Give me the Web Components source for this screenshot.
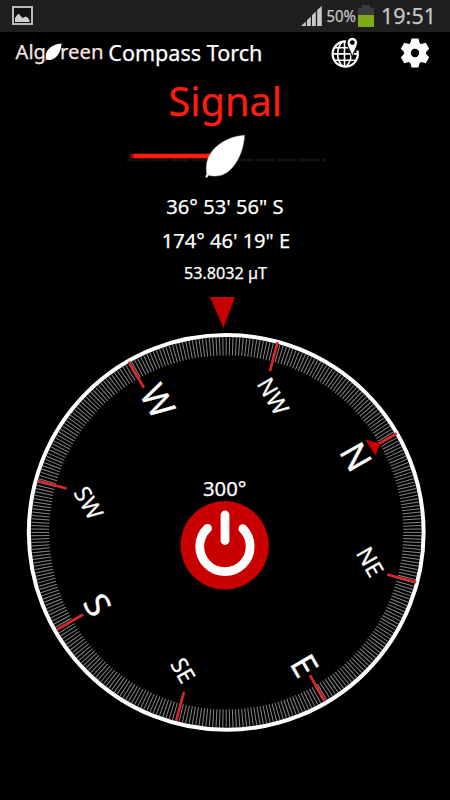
<!DOCTYPE html>
<html lang="en">
<head>
<meta charset="utf-8">
<title>Compass Torch</title>
<style>
html,body{margin:0;background:#000;height:100%;overflow:hidden}
body{font-family:"Noto Sans","Open Sans",sans-serif;color:#fff}
</style>
</head>
<body>
<compass-app></compass-app>
<script>
const define = (name, html) => customElements.define(name, class extends HTMLElement {
  constructor() {
    super();
    this.attachShadow({ mode: 'open' });
  }
  connectedCallback() {
    this.shadowRoot.innerHTML = typeof html === 'function' ? html(this) : html;
  }
});

// One line of text fitted to a measured width: w/h box, x start, b baseline, len text width.
define('fit-label', el => {
  const a = n => el.getAttribute(n);
  return `<style>:host{display:block;flex:none}svg{display:block;overflow:visible}text{stroke:currentColor;stroke-width:.25px}</style>
  <svg width="${a('w')}" height="${a('h')}"><text x="${a('x') || 0}" y="${a('b')}" font-size="${a('size')}"
   fill="currentColor" textLength="${a('len')}" lengthAdjust="spacingAndGlyphs">${a('text').replace(/"/g, '&quot;')}</text></svg>`;
});

define('status-bar', `
<style>
:host{display:flex;height:32px;background:#1f1f1f;color:#c4c4c4;align-items:flex-start}
svg{display:block;flex:none}
.pic{margin:6px 0 0 12px}
.gap{flex:1}
.sig{margin:6px 3px 0 0}
.bat{margin:5px 8px 0 0}
</style>
<svg class="pic" width="21" height="19"><rect x="1" y="1" width="19" height="17" fill="#111" stroke="#b9b9b9" stroke-width="2"/><path d="M3 16V12L5.500 8.500L7 8L9.500 11L11 12L13.500 10.500L15 11L17.500 14V16Z" fill="#d0d0d0"/></svg>
<span class="gap"></span>
<svg class="sig" width="22" height="21"><path d="M0 20L4.800 15.500V20ZM6 20V14.300L9.800 10.500V20ZM11 20V9.300L14.800 5.500V20ZM16.200 20V4L20.800 0V20Z" fill="#c8c8c8"/></svg>
<fit-label w="32" h="32" x=".5" b="22" size="15.500" len="29.500" text="50%"></fit-label>
<svg class="bat" width="16" height="22"><path d="M4 0H12V3H16V10H0V3H4Z" fill="#3b3b3b"/><rect y="10" width="16" height="12" fill="#7cab17"/></svg>
<fit-label w="68" h="32" x="-1" b="23.500" size="22.500" len="55" text="19:51"></fit-label>`);

define('leaf-mark', `
<style>:host{display:block;flex:none}svg{display:block;width:100%;height:100%}</style>
<svg viewBox="0 0 40 44" preserveAspectRatio="none"><path d="M39 1C38 20 29 37 14 41C9 42 5 41 3 40.500L2 43L0.500 42L2 39C1 31 1 23 8 15C15 7 26 2 39 1Z" fill="#fff"/></svg>`);

define('app-header', `
<style>
:host{display:flex;height:44px}
.logo{display:flex;color:#f6e4e2;margin-left:15px}
leaf-mark{width:17px;height:18px;margin:10.500px -1px 0 -1px}
.title{margin-left:5px}
.gap{flex:1}
svg{display:block;flex:none}
.globe{margin:5px 41px 0 0}
.gear{margin:5px 20px 0 0}
</style>
<div class="logo"><fit-label w="31" h="44" x=".5" b="26.500" size="20" len="30.500" text="Alg"></fit-label><leaf-mark></leaf-mark><fit-label w="42" h="44" x="-1" b="26.500" size="20" len="43.500" text="reen"></fit-label></div>
<fit-label class="title" w="155" h="44" x=".3" b="28.700" size="21" len="154" text="Compass Torch"></fit-label>
<span class="gap"></span>
<svg class="globe" width="29" height="32" viewBox="0 0 29 32"><g fill="none" stroke="#fff" stroke-width="1.600"><path d="M16 4.500A12.600 12.600 0 1 0 27.300 13.500" stroke-width="2.200"/><path d="M14.500 4.500V29M3 16.900H27.500M5 10.700H18M5 23.300H25.500"/><path d="M12.500 4.800C6 11 6 23 12.500 29M21 18C21 22 19.500 26 16.500 29"/></g><path d="M22.300 0.300A5.200 5.200 0 0 1 27.500 5.500C27.500 10 24 13 22.300 20.500C20.600 13 17.100 10 17.100 5.500A5.200 5.200 0 0 1 22.300 .3Z" fill="#fff" stroke="#000" stroke-width="1"/><circle cx="22.300" cy="5.600" r="2.400" fill="#000"/></svg>
<svg class="gear" width="30" height="32" viewBox="-15 -16 30 32"><g fill="#fff"><circle r="10.800"/><path d="M-5 -9L-3.400 -14.400H3.400L5 -9V9L3.400 14.400H-3.400L-5 9Z"/><path transform="rotate(60)" d="M-5 -9L-3.400 -14.400H3.400L5 -9V9L3.400 14.400H-3.400L-5 9Z"/><path transform="rotate(120)" d="M-5 -9L-3.400 -14.400H3.400L5 -9V9L3.400 14.400H-3.400L-5 9Z"/></g><circle r="4.200" fill="#000"/></svg>`);

define('signal-meter', `
<style>
:host{display:flex;flex-direction:column;align-items:center;height:109px}
.s{color:#ff1e0c}
svg{display:block;width:450px;height:54px}
</style>
<fit-label class="s" w="450" h="55" x="168.500" b="40" size="40" len="113.500" text="Signal"></fit-label>
<svg viewBox="0 131 450 54"><defs><linearGradient id="g"><stop offset="0" stop-color="#ff1e0c" stop-opacity="0"/><stop offset=".08" stop-color="#ff1e0c"/></linearGradient></defs>
<path d="M126.500 160H325" stroke="#141414" stroke-width="2.500" stroke-dasharray="19 2.700"/>
<rect x="128" y="153.700" width="88" height="4.600" fill="url(#g)"/>
<path d="M244.500 135.300C244 150 236 170 222 175C216 176.800 211 176 208.500 175.300L207 177.700L205.500 176.600L206.800 174C205.500 166 206.500 158 213 150C221 141 233 136 244.500 135.300Z" fill="#fff" stroke="#bbb" stroke-width=".5"/></svg>`);

define('geo-readout', `
<style>:host{display:block;height:110px}</style>
<fit-label w="450" h="35" x="166.300" b="28.500" size="20.300" len="117.300" text='36° 53&#39; 56&quot; S'></fit-label>
<fit-label w="450" h="35" x="161.800" b="28.300" size="20.300" len="128.300" text='174° 46&#39; 19&quot; E'></fit-label>
<fit-label w="450" h="40" x="184" b="23.700" size="16.200" len="83" text="53.8032 µT"></fit-label>`);

define('compass-dial', () => {
  const cx = 226.2, cy = 532.4, heading = 300, spin = 360 - heading;
  let ticks = '', marks = '';
  for (let d = 0; d < 360; d++)
    ticks += `<path transform="rotate(${d})" d="M0 -195V-177"/>`;
  for (let d = 0; d < 360; d += 45)
    marks += `<path transform="rotate(${d + spin})" d="M0 -196V-${d ? 166 : 174}"/>`;
  // Name, centre x, centre y, font size, text length
  const names = [['N', 355.8, 456.7, 35, 26], ['NE', 370, 562, 23, 30], ['E', 304.5, 665.5, 34, 19.5], ['SE', 183, 670.5, 23, 24.5],
    ['S', 97.5, 604.8, 34, 19.5], ['SW', 88.5, 503, 23, 33.5], ['W', 157.6, 401, 35.5, 32], ['NW', 273, 396.2, 23, 38.5]];
  const labels = names.map(([t, x, y, s, l]) =>
    `<text transform="translate(${x} ${y}) rotate(60)" y="${s * .357}" font-size="${s}" textLength="${l}" lengthAdjust="spacingAndGlyphs">${t}</text>`).join('');
  return `<style>:host{display:block}svg{display:block}text{stroke:#fff;stroke-width:.25px}</style>
<svg width="450" height="505" viewBox="0 295 450 505">
<path d="M210 297H235L223.500 328Z" fill="#c80000"/>
<g transform="translate(${cx} ${cy})" fill="none">
<g stroke="#858585" stroke-width="1">${ticks}</g>
<circle r="197.400" stroke="#fff" stroke-width="4"/>
<g transform="translate(.7 -.9)" stroke="#d8282c" stroke-width="2.600">${marks}</g></g>
<path d="M365.500 439.700L380 443.500L375.300 455.300L372.700 446.500Z" fill="#c80000"/>
<path d="M365.500 439.700L380.500 443.500L375.300 455.300Z" fill="#c80000"/>
<g fill="#fff" text-anchor="middle">${labels}</g>
<text x="203" y="495.700" font-size="20.300" fill="#fff" textLength="43.500" lengthAdjust="spacingAndGlyphs">300°</text>
<circle cx="224.700" cy="545.300" r="44.200" fill="#c80000"/>
<g fill="none" stroke="#fff" stroke-width="8.800" stroke-linecap="round"><path d="M225 515V540.500"/><path d="M207.500 528.300A25.200 25.200 0 1 0 242.800 528.700"/></g>
</svg>`;
});

define('compass-app', `
<style>:host{display:flex;flex-direction:column;width:450px;height:800px;background:#000;overflow:hidden}</style>
<status-bar></status-bar><app-header></app-header><signal-meter></signal-meter><geo-readout></geo-readout><compass-dial></compass-dial>`);
</script>
</body>
</html>
